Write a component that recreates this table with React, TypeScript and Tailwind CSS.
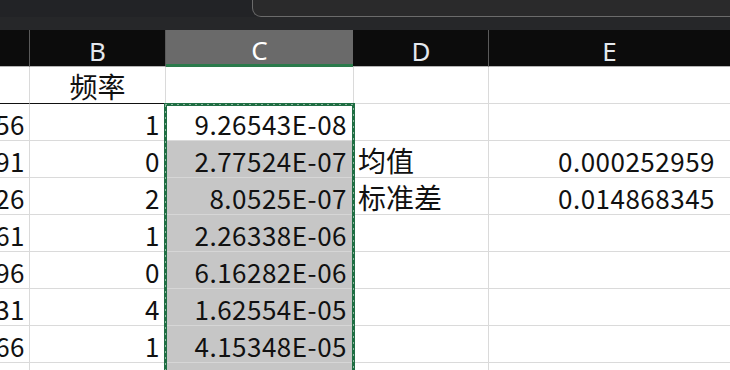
import React from "react";

const cellFont = { fontFamily: '"Noto Sans CJK SC", "Noto Sans", sans-serif' };
const headFont = { fontFamily: '"Noto Sans", "Open Sans", sans-serif' };

type Row = { a: string; b: string; c: string; d: string; e: string };

const rows: Row[] = [
  { a: "0.1523156", b: "1", c: "9.26543E-08", d: "", e: "" },
  { a: "0.1523191", b: "0", c: "2.77524E-07", d: "均值", e: "0.000252959" },
  { a: "0.1523226", b: "2", c: "8.0525E-07", d: "标准差", e: "0.014868345" },
  { a: "0.1523261", b: "1", c: "2.26338E-06", d: "", e: "" },
  { a: "0.1523296", b: "0", c: "6.16282E-06", d: "", e: "" },
  { a: "0.1523331", b: "4", c: "1.62554E-05", d: "", e: "" },
  { a: "0.1523366", b: "1", c: "4.15348E-05", d: "", e: "" },
  { a: "", b: "", c: "", d: "", e: "" },
];

function HeaderCell({ label, w, active }: { label: string; w: string; active?: boolean }) {
  return (
    <div
      className={`${w} h-full flex items-center justify-center pt-[6px] text-[26px] ${
        active
          ? "bg-[#6a6a6a] border-b-[3px] border-b-[#2b7a4b] text-white"
          : "border-r border-r-[#5a5a5a] border-b border-b-[#b5b5b5] text-[#e4e8ee]"
      }`}
      style={headFont}
    >
      {label}
    </div>
  );
}

export default function App() {
  return (
    <div className="relative w-[730px] h-[370px] overflow-hidden bg-white" style={cellFont}>
      {/* window chrome above the sheet */}
      <div className="h-[30px] bg-[#242528] flex flex-col">
        <div className="flex h-[17px] bg-[#222326]">
          <div className="w-[252px]" />
          <div className="flex-1 rounded-bl-[9px] border-l border-b border-[#6b6b6b] bg-[#2a2a2b]" />
        </div>
        <div className="flex-1 bg-[#262729]" />
      </div>

      {/* column letters */}
      <div className="flex h-[37px] bg-[#0c0c0c]">
        <HeaderCell label="" w="w-[30px]" />
        <HeaderCell label="B" w="w-[136px]" />
        <HeaderCell label="C" w="w-[187px]" active />
        <div className="w-px h-full bg-[#0c0c0c] border-b border-b-[#b5b5b5]" />
        <HeaderCell label="D" w="w-[135px]" />
        <div className="flex-1 h-full flex items-center justify-center pt-[6px] text-[26px] text-[#e4e8ee] border-b border-b-[#b5b5b5]" style={headFont}>
          E
        </div>
      </div>

      {/* row 1 */}
      <div className="flex h-[37px] text-[28px] text-[#111]">
        <div className="w-[30px] border-r border-r-[#dadada] border-b border-b-[#111]" />
        <div className="w-[136px] border-r border-r-[#dadada] border-b border-b-[#111] flex items-end justify-center leading-none pb-[3px]">
          频率
        </div>
        <div className="w-[188px] border-r border-r-[#dadada] border-b border-b-[#dadada]" />
        <div className="w-[135px] border-r border-r-[#dadada] border-b border-b-[#dadada]" />
        <div className="flex-1 border-b border-b-[#dadada]" />
      </div>

      {rows.map((r, i) => {
        const selected = i > 0;
        return (
          <div key={i} className="flex h-[37px] text-[26px] text-[#111] leading-none tracking-[0.5px]">
            <div className="w-[30px] border-r border-r-[#dadada] border-b border-b-[#dadada] overflow-hidden flex items-end justify-end pr-[4px] pb-[3px]">
              <span className="whitespace-nowrap">{r.a}</span>
            </div>
            <div className="w-[136px] border-r border-r-[#dadada] border-b border-b-[#dadada] flex items-end justify-end pr-[5px] pb-[3px]">
              {r.b}
            </div>
            <div
              className={`w-[188px] border-r border-r-[#dadada] border-b flex items-end justify-end pr-[6px] pb-[3px] ${
                selected ? "bg-[#c6c6c6] border-b-[#d6d6d6]" : "bg-white border-b-[#dadada]"
              }`}
            >
              {r.c}
            </div>
            <div className="w-[135px] border-r border-r-[#dadada] border-b border-b-[#dadada] flex items-end justify-start pl-[4px] pb-[3px] text-[28px] tracking-normal">
              {r.d}
            </div>
            <div className="flex-1 border-b border-b-[#dadada] flex items-end justify-end pr-[15px] pb-[3px]">
              {r.e}
            </div>
          </div>
        );
      })}

      {/* copy marquee around the C range */}
      <svg className="absolute left-[164px] top-[103px]" width="191" height="280">
        <rect x="1.5" y="1.5" width="188" height="290" fill="none" stroke="#1f6e43" strokeWidth="3" />
        <rect x="1.5" y="1.5" width="188" height="290" fill="none" stroke="#ffffff" strokeWidth="1" strokeDasharray="1 5" />
      </svg>
    </div>
  );
}
